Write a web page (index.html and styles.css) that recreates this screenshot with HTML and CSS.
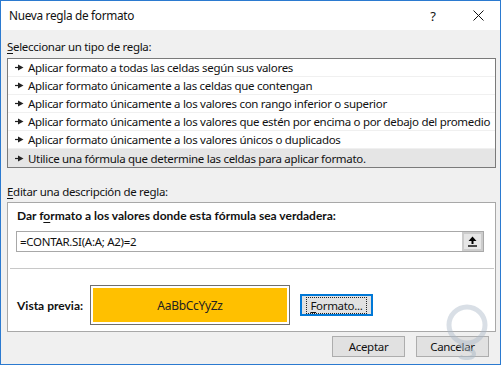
FILE: index.html
```html
<!DOCTYPE html>
<html lang="es">
<head>
    <meta charset="UTF-8">
    <meta name="viewport" content="width=device-width, initial-scale=1.0">
    <title>Nueva regla de formato</title>
    <link rel="stylesheet" href="styles.css">
</head>
<body>
    <div class="dialog">
        <div class="titlebar">
            <span class="title">Nueva regla de formato</span>
            <span class="help">?</span>
            <span class="close">
                <svg width="11" height="11" viewBox="0 0 11 11"><path d="M0.5 0.5 L10.5 10.5 M10.5 0.5 L0.5 10.5" stroke="#111" stroke-width="1" fill="none"/></svg>
            </span>
        </div>

        <div class="content">
            <div class="label"><u>S</u>eleccionar un tipo de regla:</div>
            <ul class="rule-list">
                <li><svg class="arrow" width="9" height="7" viewBox="0 0 9 7"><path d="M0 3.5 H4" stroke="#222" stroke-width="1.2"/><path d="M3 0.5 L8.5 3.5 L3 6.5 Z" fill="#222"/></svg>Aplicar formato a todas las celdas según sus valores</li>
                <li><svg class="arrow" width="9" height="7" viewBox="0 0 9 7"><path d="M0 3.5 H4" stroke="#222" stroke-width="1.2"/><path d="M3 0.5 L8.5 3.5 L3 6.5 Z" fill="#222"/></svg>Aplicar formato únicamente a las celdas que contengan</li>
                <li><svg class="arrow" width="9" height="7" viewBox="0 0 9 7"><path d="M0 3.5 H4" stroke="#222" stroke-width="1.2"/><path d="M3 0.5 L8.5 3.5 L3 6.5 Z" fill="#222"/></svg>Aplicar formato únicamente a los valores con rango inferior o superior</li>
                <li><svg class="arrow" width="9" height="7" viewBox="0 0 9 7"><path d="M0 3.5 H4" stroke="#222" stroke-width="1.2"/><path d="M3 0.5 L8.5 3.5 L3 6.5 Z" fill="#222"/></svg>Aplicar formato únicamente a los valores que estén por encima o por debajo del promedio</li>
                <li><svg class="arrow" width="9" height="7" viewBox="0 0 9 7"><path d="M0 3.5 H4" stroke="#222" stroke-width="1.2"/><path d="M3 0.5 L8.5 3.5 L3 6.5 Z" fill="#222"/></svg>Aplicar formato únicamente a los valores únicos o duplicados</li>
                <li class="selected"><svg class="arrow" width="9" height="7" viewBox="0 0 9 7"><path d="M0 3.5 H4" stroke="#222" stroke-width="1.2"/><path d="M3 0.5 L8.5 3.5 L3 6.5 Z" fill="#222"/></svg>Utilice una fórmula que determine las celdas para aplicar formato.</li>
            </ul>

            <div class="label label-edit"><u>E</u>ditar una descripción de regla:</div>
            <div class="desc">
                <div class="desc-title">Dar f<u>o</u>rmato a los valores donde esta fórmula sea verdadera:</div>
                <div class="formula">
                    <div class="formula-input">=CONTAR.SI(A:A; A2)=2</div>
                    <div class="collapse">
                        <svg width="9" height="11" viewBox="0 0 9 11"><path d="M4.5 0.5 L8.5 5 H5.5 V8 H3.5 V5 H0.5 Z" fill="#000"/><path d="M0 10 H9" stroke="#000" stroke-width="1.4"/></svg>
                    </div>
                </div>
                <div class="sep"></div>
                <div class="preview-row">
                    <span class="preview-label">Vista previa:</span>
                    <div class="preview"><div class="preview-inner">AaBbCcYyZz</div></div>
                    <button class="btn btn-focus"><span><u>F</u>ormato...</span></button>
                </div>
            </div>

            <div class="footer">
                <button class="btn">Aceptar</button>
                <button class="btn">Cancelar</button>
            </div>
        </div>

        <svg class="watermark" width="46" height="58" viewBox="0 0 46 58">
            <circle cx="23" cy="21" r="18" fill="none" stroke="rgba(170,185,200,0.45)" stroke-width="5"/>
            <path d="M16 40 C16 46 30 44 30 50 C30 55 18 55 16 52" fill="none" stroke="rgba(170,185,200,0.5)" stroke-width="4"/>
        </svg>
    </div>
</body>
</html>
```

FILE: styles.css
```css
body {
    margin: 0;
    background: #ffffff;
    font-family: "Noto Sans", Arial, sans-serif;
    font-size: 11.5px;
    letter-spacing: -0.3px;
    color: #111;
}
u {
    text-decoration-thickness: 1px;
    text-underline-offset: 2px;
}
.dialog {
    position: relative;
    width: 501px;
    height: 365px;
    box-sizing: border-box;
    border: 1px solid #2b7ad0;
    background: #f0f0f0;
    display: flex;
    flex-direction: column;
    overflow: hidden;
}
.titlebar {
    height: 29px;
    background: #ffffff;
    display: flex;
    align-items: center;
    padding-left: 8px;
    flex-shrink: 0;
}
.title {
    flex: 1;
    font-size: 11.8px;
    line-height: 16px;
    padding-bottom: 1px;
}
.help {
    width: 20px;
    text-align: center;
    font-size: 13px;
    margin-right: 30px;
}
.close {
    width: 11px;
    height: 11px;
    margin-right: 16px;
    display: flex;
}
.content {
    padding: 9px 4px 0 6px;
    flex: 1;
}
.label {
    line-height: 16px;
    height: 16px;
}
.rule-list {
    list-style: none;
    margin: 3px 0 0 0;
    padding: 0;
    background: #ffffff;
    border: 1px solid #7a7a7a;
}
.rule-list li {
    height: 17px;
    line-height: 17px;
    border-bottom: 1px solid #f0f0f0;
    padding-left: 7px;
    white-space: nowrap;
    display: flex;
    align-items: center;
}
.rule-list li:last-child {
    border-bottom: none;
    height: 18px;
}
.rule-list li.selected {
    background: #e5e5e5;
}
.arrow {
    margin-right: 4px;
    flex-shrink: 0;
}
.label-edit {
    margin-top: 16px;
}
.desc {
    margin-top: 2px;
    background: #ffffff;
    border: 1px solid #a8a8a8;
    padding: 5px 0 6px 0;
}
.desc-title {
    font-family: Lato, "Noto Sans", sans-serif;
    font-size: 12px;
    letter-spacing: 0;
    font-weight: bold;
    line-height: 16px;
    padding-left: 9px;
}
.formula {
    display: flex;
    margin: 7px 0 0 8px;
    width: 468px;
    height: 21px;
    box-sizing: border-box;
    border: 1px solid #a8a8a8;
}
.formula-input {
    flex: 1;
    line-height: 19px;
    padding-left: 3px;
}
.collapse {
    width: 21px;
    box-sizing: border-box;
    border: 2px solid #cccccc;
    background: #e6e6e6;
    display: flex;
    align-items: center;
    justify-content: center;
}
.sep {
    height: 1px;
    background: #c8c8c8;
    margin: 16px 1px 0 2px;
}
.preview-row {
    display: flex;
    align-items: center;
    margin-top: 16px;
    padding-left: 9px;
}
.preview-label {
    font-family: Lato, "Noto Sans", sans-serif;
    font-size: 12px;
    letter-spacing: 0;
    font-weight: bold;
    width: 73px;
    white-space: nowrap;
}
.preview {
    width: 200px;
    height: 40px;
    box-sizing: border-box;
    border: 1px solid #6e6e6e;
    padding: 2px;
    background: #ffffff;
}
.preview-inner {
    height: 100%;
    background: #ffc000;
    display: flex;
    align-items: center;
    justify-content: center;
    font-size: 12px;
    color: #222;
}
.btn {
    font-family: inherit;
    font-size: 11.5px;
    letter-spacing: -0.3px;
    color: #111;
    width: 73px;
    height: 21px;
    padding: 0;
    background: #e1e1e1;
    border: 1px solid #adadad;
}
.btn-focus {
    margin-left: 10px;
    height: 22px;
    border: 1px solid #0078d7;
    box-shadow: inset 0 0 0 1px #0078d7;
}
.btn-focus span {
    display: inline-block;
    outline: 1px dotted #222;
    padding: 0 3px;
    line-height: 15px;
}
.footer {
    display: flex;
    justify-content: flex-end;
    gap: 11px;
    margin-top: 4px;
    padding-right: 7px;
}
.watermark {
    position: absolute;
    right: 10px;
    bottom: 2px;
}
```
